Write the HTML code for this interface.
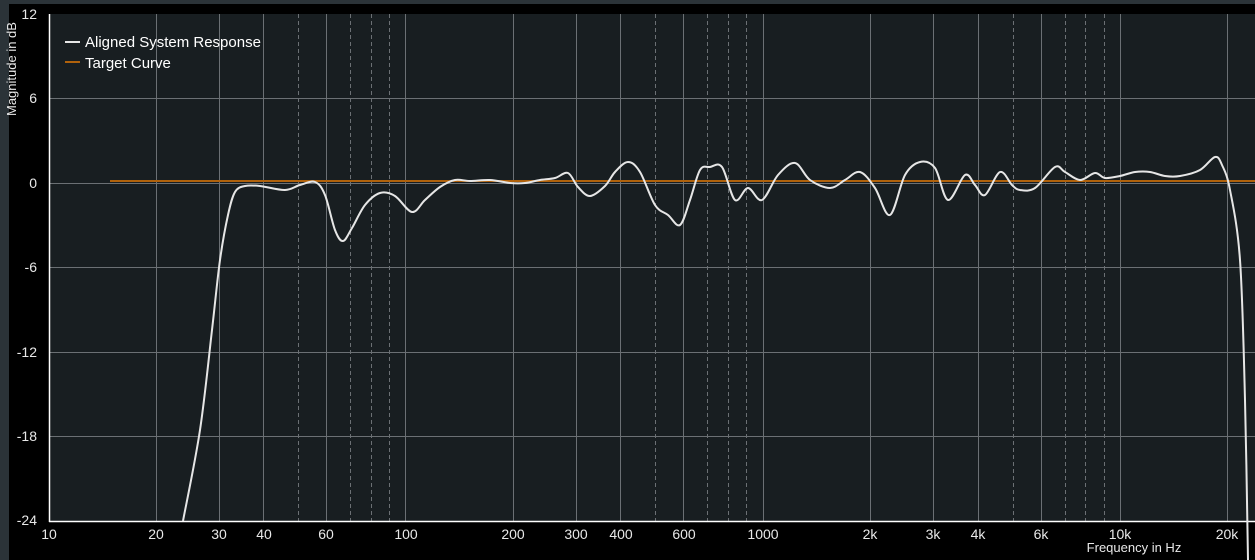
<!DOCTYPE html>
<html><head><meta charset="utf-8"><style>
html,body{margin:0;padding:0;background:#000;width:1255px;height:560px;overflow:hidden}
svg{display:block;font-family:"Liberation Sans","DejaVu Sans",sans-serif}
</style></head><body>
<svg width="1255" height="560" viewBox="0 0 1255 560" xmlns="http://www.w3.org/2000/svg">
<rect x="0" y="0" width="1255" height="560" fill="#000"/>
<rect x="0" y="0" width="1255" height="4" fill="#2b3338"/>
<rect x="0" y="0" width="9" height="560" fill="#2b3338"/>
<rect x="49" y="14" width="1206" height="507" fill="#181e21"/>
<g stroke="#6b7074" stroke-width="1">
<line x1="49" x2="1255" y1="98.5" y2="98.5"/>
<line x1="49" x2="1255" y1="183.5" y2="183.5"/>
<line x1="49" x2="1255" y1="267.5" y2="267.5"/>
<line x1="49" x2="1255" y1="352.5" y2="352.5"/>
<line x1="49" x2="1255" y1="436.5" y2="436.5"/>
<line x1="156.5" x2="156.5" y1="14" y2="521"/><line x1="219.5" x2="219.5" y1="14" y2="521"/><line x1="263.5" x2="263.5" y1="14" y2="521"/><line x1="326.5" x2="326.5" y1="14" y2="521"/><line x1="405.5" x2="405.5" y1="14" y2="521"/>
<line x1="513.5" x2="513.5" y1="14" y2="521"/><line x1="576.5" x2="576.5" y1="14" y2="521"/><line x1="620.5" x2="620.5" y1="14" y2="521"/><line x1="683.5" x2="683.5" y1="14" y2="521"/><line x1="763.5" x2="763.5" y1="14" y2="521"/>
<line x1="870.5" x2="870.5" y1="14" y2="521"/><line x1="933.5" x2="933.5" y1="14" y2="521"/><line x1="978.5" x2="978.5" y1="14" y2="521"/><line x1="1041.5" x2="1041.5" y1="14" y2="521"/><line x1="1120.5" x2="1120.5" y1="14" y2="521"/><line x1="1227.5" x2="1227.5" y1="14" y2="521"/>
</g>
<g stroke="#6b7074" stroke-width="1" stroke-dasharray="4,3">
<line x1="298.5" x2="298.5" y1="14" y2="521"/><line x1="350.5" x2="350.5" y1="14" y2="521"/><line x1="371.5" x2="371.5" y1="14" y2="521"/><line x1="389.5" x2="389.5" y1="14" y2="521"/>
<line x1="655.5" x2="655.5" y1="14" y2="521"/><line x1="707.5" x2="707.5" y1="14" y2="521"/><line x1="728.5" x2="728.5" y1="14" y2="521"/><line x1="746.5" x2="746.5" y1="14" y2="521"/>
<line x1="1013.5" x2="1013.5" y1="14" y2="521"/><line x1="1065.5" x2="1065.5" y1="14" y2="521"/><line x1="1085.5" x2="1085.5" y1="14" y2="521"/><line x1="1104.5" x2="1104.5" y1="14" y2="521"/>
</g>
<line x1="49.5" x2="49.5" y1="14" y2="522" stroke="#fff" stroke-width="1.5"/>
<line x1="49" x2="1255" y1="521.5" y2="521.5" stroke="#fff" stroke-width="1.5"/>
<line x1="110" x2="1255" y1="181" y2="181" stroke="#b0620c" stroke-width="2"/>
<path id="resp" fill="none" stroke="#e6e6e6" stroke-width="2" stroke-linejoin="round" d="M183,521 L200,430 L212,330 L220,260 L228,215 L235,192 L245,186 L260,186 L285,190 L300,185 L315,182 L325,195 L335,230 L343,241 L352,228 L365,205 L380,193 L395,196 L412,212 L425,200 L440,187 L455,180 L470,181 L490,180 L510,183 L525,183 L540,180 L555,178 L568,173 L578,187 L590,196 L605,186 L615,172 L628,162 L640,172 L655,205 L668,215 L680,225 L690,200 L700,170 L710,167 L722,167 L735,200 L748,188 L762,200 L778,175 L795,163 L810,180 L830,188 L845,180 L860,172 L875,188 L890,215 L905,175 L920,162 L935,168 L948,200 L965,175 L975,185 L985,195 L1000,172 L1012,185 L1020,190 L1035,188 L1055,167 L1065,172 L1080,180 L1095,173 L1105,178 L1120,176 L1135,172 L1150,172 L1165,176 L1180,176 L1200,170 L1215,157 L1222,165 L1230,190 L1240,260 L1245,400 L1248,560"/>
<line x1="65" x2="80" y1="42" y2="42" stroke="#e6e6e6" stroke-width="2"/>
<line x1="65" x2="80" y1="62" y2="62" stroke="#b0620c" stroke-width="2"/>
<g fill="#fff" font-size="15"><text x="85" y="47">Aligned System Response</text><text x="85" y="68">Target Curve</text></g>
<g fill="#e8e8e8" font-size="14" text-anchor="end">
<text x="37" y="19">12</text><text x="37" y="103">6</text><text x="37" y="188">0</text><text x="37" y="272">-6</text><text x="37" y="357">-12</text><text x="37" y="441">-18</text><text x="37" y="525">-24</text>
</g>
<text transform="translate(16,116) rotate(-90)" fill="#e8e8e8" font-size="13">Magnitude in dB</text>
<g fill="#e8e8e8" font-size="14" text-anchor="middle">
<text x="49" y="539">10</text><text x="156" y="539">20</text><text x="219" y="539">30</text><text x="264" y="539">40</text><text x="326" y="539">60</text><text x="406" y="539">100</text>
<text x="513" y="539">200</text><text x="576" y="539">300</text><text x="621" y="539">400</text><text x="684" y="539">600</text><text x="763" y="539">1000</text>
<text x="870" y="539">2k</text><text x="933" y="539">3k</text><text x="978" y="539">4k</text><text x="1041" y="539">6k</text><text x="1120" y="539">10k</text><text x="1227" y="539">20k</text>
<text x="1134" y="552" font-size="13">Frequency in Hz</text>
</g>
</svg>
<script>
(function(){var p=document.getElementById('resp');var d=p.getAttribute('d');var n=d.match(/-?\d+(\.\d+)?/g).map(Number);var pts=[];for(var i=0;i<n.length;i+=2)pts.push([n[i],n[i+1]]);var s='M'+pts[0][0]+','+pts[0][1];for(var i=0;i<pts.length-1;i++){var p0=pts[i-1]||pts[i],p1=pts[i],p2=pts[i+1],p3=pts[i+2]||p2;var c1x=p1[0]+(p2[0]-p0[0])/6,c1y=p1[1]+(p2[1]-p0[1])/6,c2x=p2[0]-(p3[0]-p1[0])/6,c2y=p2[1]-(p3[1]-p1[1])/6;s+=' C'+c1x.toFixed(1)+','+c1y.toFixed(1)+' '+c2x.toFixed(1)+','+c2y.toFixed(1)+' '+p2[0]+','+p2[1];}p.setAttribute('d',s);})();
</script>
</body></html>
